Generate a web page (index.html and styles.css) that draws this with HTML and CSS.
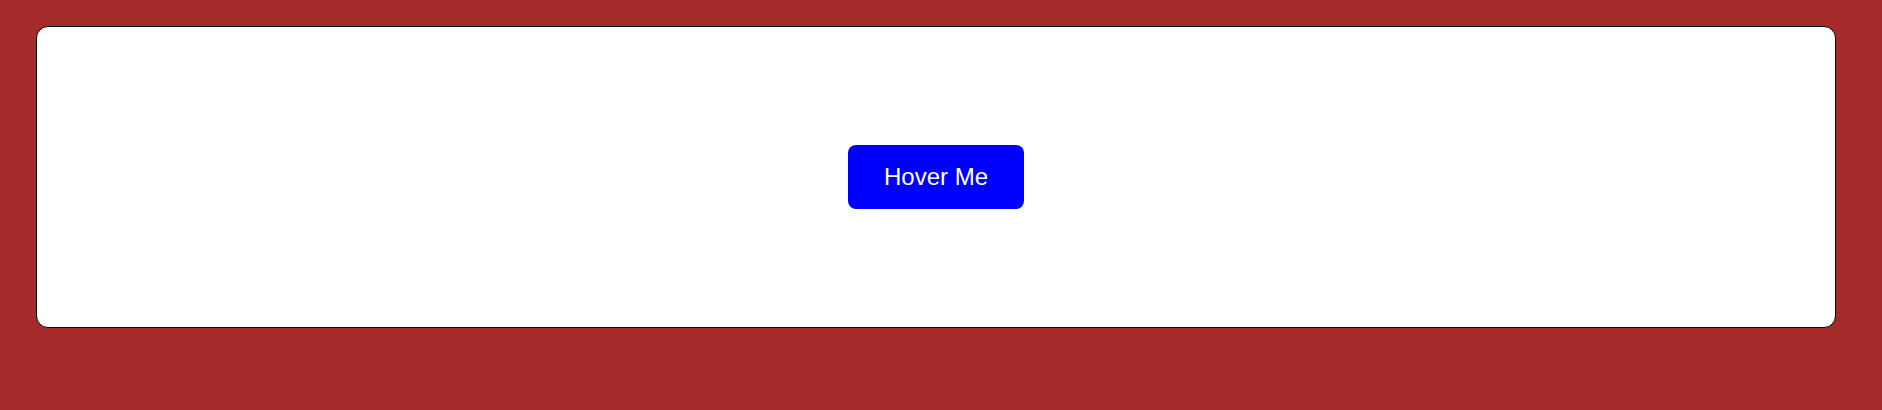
FILE: index.html
```html
<!DOCTYPE html>
<html>
<head>
<meta charset="utf-8">
<link rel="stylesheet" href="styles.css">
</head>
<body>
<div class="card">
  <button class="hover-btn">Hover Me</button>
</div>
</body>
</html>
```
FILE: styles.css
```css
html, body {
  margin: 0;
  background: #a52a2a;
}
body {
  padding: 26px 0 0 36px;
  font-family: "Liberation Sans", Arial, sans-serif;
}
.card {
  box-sizing: border-box;
  width: 1800px;
  height: 302px;
  background: #fff;
  border: 1px solid #000;
  border-radius: 12px;
  display: flex;
  align-items: center;
  justify-content: center;
}
.hover-btn {
  font-family: "Liberation Sans", Arial, sans-serif;
  font-size: 24px;
  padding: 18px 36px;
  background: #0000ff;
  color: #fff;
  border: none;
  border-radius: 8px;
  cursor: pointer;
}
```
